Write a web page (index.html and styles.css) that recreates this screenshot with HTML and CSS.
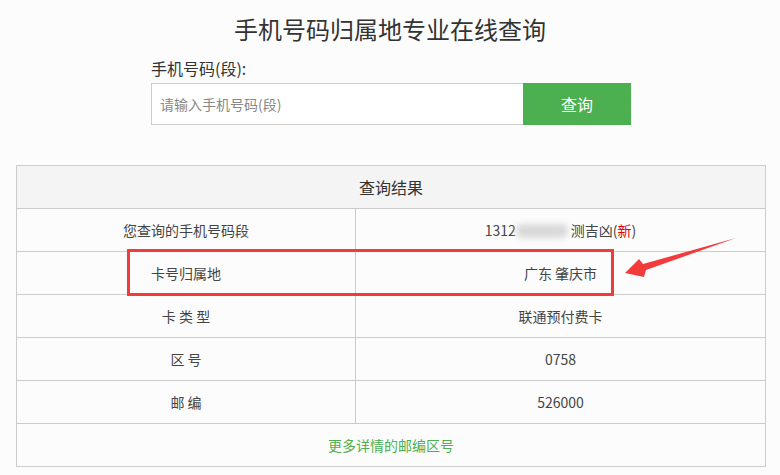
FILE: index.html
```html
<!DOCTYPE html>
<html lang="zh-CN">
<head>
<meta charset="utf-8">
<title>手机号码归属地专业在线查询</title>
<link rel="stylesheet" href="styles.css">
</head>
<body>
<div class="page">
  <h1 class="title">手机号码归属地专业在线查询</h1>
  <form class="search">
    <label class="search-label" for="phone">手机号码(段):</label>
    <div class="search-row">
      <input id="phone" class="search-input" type="text" placeholder="请输入手机号码(段)">
      <button class="search-btn" type="button">查询</button>
    </div>
  </form>
  <table class="result">
    <colgroup><col class="col-key"><col class="col-val"></colgroup>
    <thead>
      <tr><th colspan="2">查询结果</th></tr>
    </thead>
    <tbody>
      <tr><td>您查询的手机号码段</td><td>1312<span class="blur"></span> 测吉凶(<span class="new">新</span>)</td></tr>
      <tr><td>卡号归属地</td><td>广东 肇庆市</td></tr>
      <tr><td>卡 类 型</td><td>联通预付费卡</td></tr>
      <tr><td>区 号</td><td>0758</td></tr>
      <tr><td>邮 编</td><td>526000</td></tr>
      <tr><td colspan="2" class="more"><a href="#">更多详情的邮编区号</a></td></tr>
    </tbody>
  </table>
  <div class="mark-box"></div>
  <svg class="mark-arrow" width="780" height="475" viewBox="0 0 780 475">
    <polygon points="625,273 639,259 643,264 736,238 646,270 644,277" fill="#f23b3b"/>
  </svg>
</div>
</body>
</html>
```
FILE: styles.css
```css
* { box-sizing: border-box; }
html, body { margin: 0; padding: 0; }
body {
  background: #fcfcfc;
  font-family: "Noto Sans CJK SC", "Liberation Sans", sans-serif;
  color: #333;
}
.page {
  position: relative;
  width: 780px;
  height: 475px;
  padding-top: 10px;
}
.title {
  margin: 0;
  text-align: center;
  font-size: 24px;
  font-weight: normal;
  line-height: 38px;
  color: #333;
}
.search {
  width: 480px;
  margin: 7px 0 0 151px;
}
.search-label {
  display: block;
  font-size: 16px;
  line-height: 26px;
  color: #333;
  margin-bottom: 2px;
}
.search-row {
  display: flex;
  height: 42px;
}
.search-input {
  width: 372px;
  height: 42px;
  border: 1px solid #ccc;
  border-right: none;
  background: #fff;
  padding: 0 8px;
  font-family: inherit;
  font-size: 14px;
  color: #333;
  outline: none;
}
.search-input::placeholder { color: #888; }
.search-btn {
  width: 108px;
  height: 42px;
  border: none;
  background: #4caf50;
  color: #fff;
  font-family: inherit;
  font-size: 16px;
  padding: 0;
}
.result {
  margin: 40px 0 0 16px;
  width: 750px;
  border-collapse: collapse;
  table-layout: fixed;
  font-size: 14px;
  color: #444;
}
.col-key { width: 339px; }
.result th, .result td {
  border: 1px solid #ccc;
  height: 43px;
  text-align: center;
  padding: 0;
  font-weight: normal;
}
.result th {
  background: #f4f4f4;
  font-size: 16px;
  color: #333;
}
.blur {
  display: inline-block;
  width: 52px;
  height: 14px;
  vertical-align: -2px;
  background: #d8d8d8;
  border-radius: 6px;
  filter: blur(3px);
}
.new { color: #e00; }
.more a { color: #4caf50; text-decoration: none; }
.mark-box {
  position: absolute;
  left: 127px;
  top: 249px;
  width: 487px;
  height: 47px;
  border: 3px solid #f23b3b;
}
.mark-arrow {
  position: absolute;
  left: 0;
  top: 0;
  pointer-events: none;
}
```
